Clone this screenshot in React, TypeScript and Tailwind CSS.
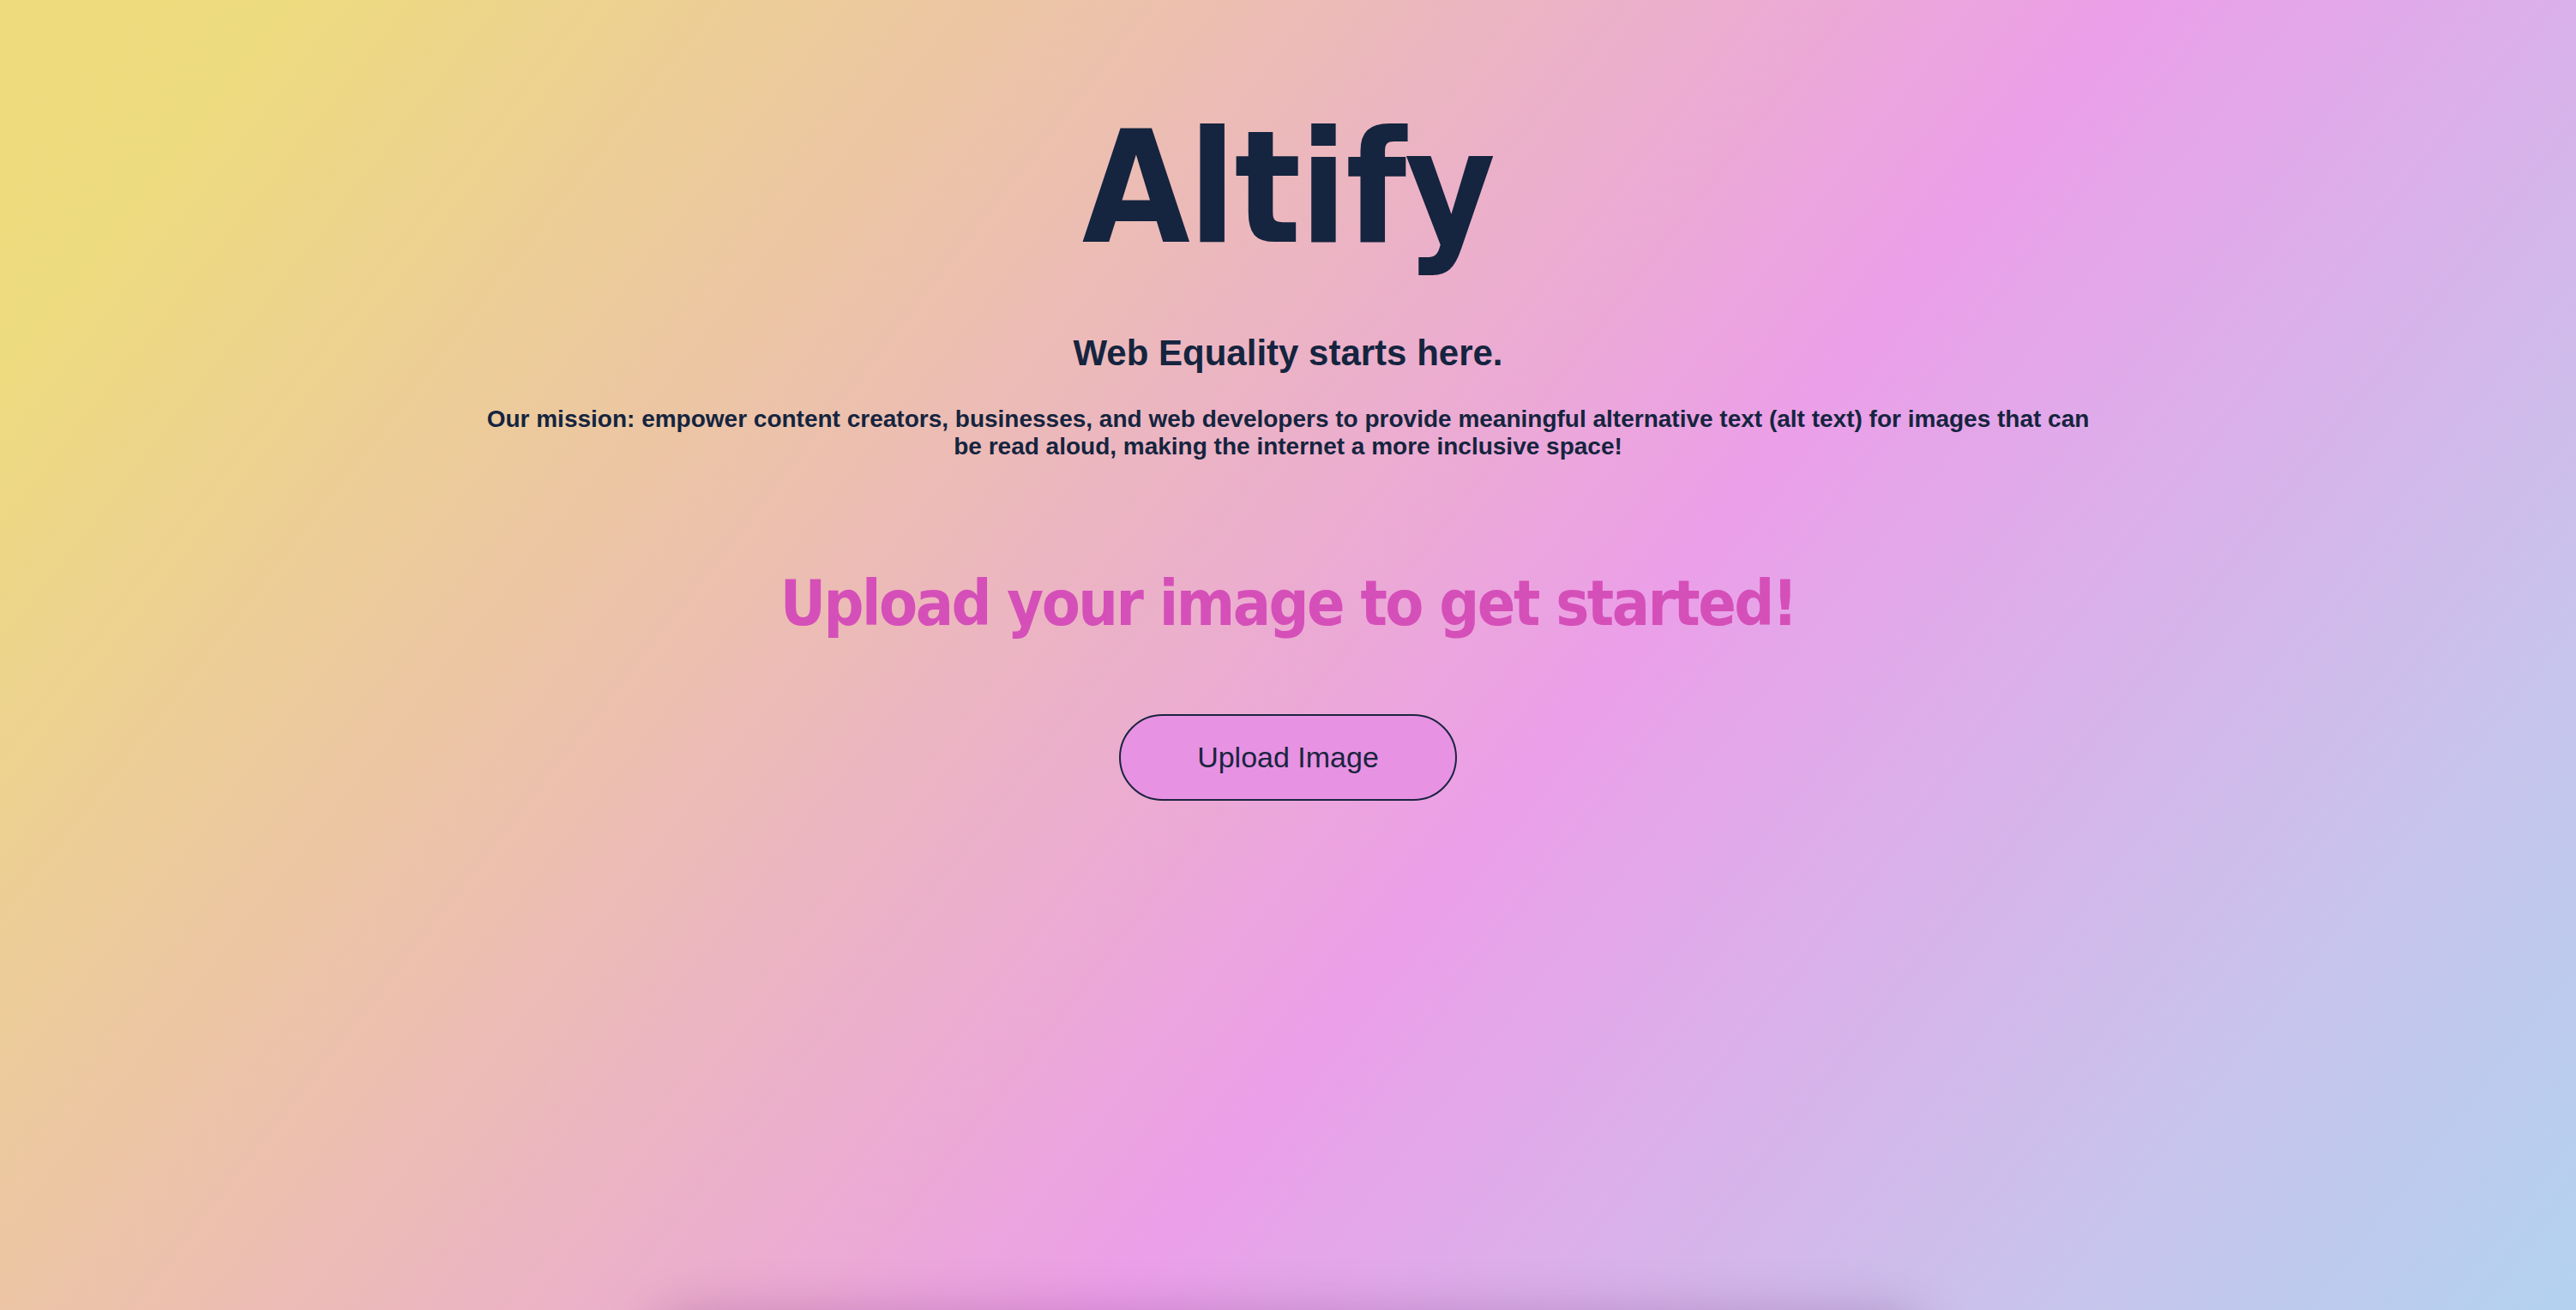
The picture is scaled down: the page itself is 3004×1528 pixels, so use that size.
import React from "react";

export default function App() {
  return (
    <div className="relative h-screen w-full overflow-hidden bg-[linear-gradient(128deg,#eddb7e_0%,#eddb7f_8%,#ecc1ac_32%,#eb9fe8_59%,#c9c2ec_84%,#b3d2ef_100%)]">
      <main className="flex flex-col items-center text-center font-['Liberation_Sans',Arial,sans-serif] text-[#15243f]">
        <h1 className="pt-[129px] font-['DejaVu_Sans_Condensed','DejaVu_Sans',sans-serif] text-[181px] leading-none font-bold tracking-[-2px] font-stretch-condensed">
          Altify
        </h1>
        <h2 className="mt-[78px] text-[42px] leading-[48px] font-bold">Web Equality starts here.</h2>
        <p className="mt-[37px] max-w-[1900px] text-[28px] leading-[32px] font-bold">
          Our mission: empower content creators, businesses, and web developers to provide meaningful
          alternative text (alt text) for images that can be read aloud, making the internet a more
          inclusive space!
        </p>
        <h3 className="mt-[130px] font-['DejaVu_Sans_Condensed','DejaVu_Sans',sans-serif] text-[73px] leading-none font-bold tracking-[-2.5px] text-[#d54fb9] font-stretch-condensed">
          Upload your image to get started!
        </h3>
        <button className="mt-[93px] flex h-[101px] w-[394px] items-center justify-center rounded-full border-2 border-[#1a2440] bg-[#e892e3] text-[34px] text-[#1a2440]">
          Upload Image
        </button>
        <section className="mt-[600px] h-[600px] w-[1480px] rounded-[40px] bg-[#e9a3e3]/40 shadow-[0_0_60px_rgba(90,20,90,0.28)]" />
      </main>
    </div>
  );
}
